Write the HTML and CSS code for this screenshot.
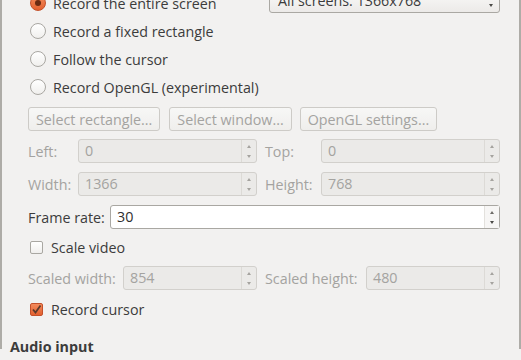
FILE: index.html
```html
<!DOCTYPE html>
<html lang="en">
<head>
    <meta charset="UTF-8">
    <title>Video input</title>
    <link rel="stylesheet" href="styles.css">
</head>
<body>
    <div class="window">
        <div class="group">
            <div class="top-row">
                <div class="option"><span class="radio checked"></span>Record the entire screen</div>
                <div class="combo">
                    <span class="val">All screens: 1366x768</span>
                    <span class="arrows"><i class="up"></i><i class="down"></i></span>
                </div>
            </div>
            <div class="option"><span class="radio"></span>Record a fixed rectangle</div>
            <div class="option"><span class="radio"></span>Follow the cursor</div>
            <div class="option"><span class="radio"></span>Record OpenGL (experimental)</div>

            <div class="buttons">
                <button class="btn" disabled>Select rectangle...</button>
                <button class="btn" disabled>Select window...</button>
                <button class="btn" disabled>OpenGL settings...</button>
            </div>

            <div class="grid area">
                <span class="lbl">Left:</span>
                <div class="spin"><span class="val">0</span><span class="arrows"><i class="up"></i><i class="down"></i></span></div>
                <span class="lbl pad">Top:</span>
                <div class="spin"><span class="val">0</span><span class="arrows"><i class="up"></i><i class="down"></i></span></div>
                <span class="lbl">Width:</span>
                <div class="spin"><span class="val">1366</span><span class="arrows"><i class="up"></i><i class="down"></i></span></div>
                <span class="lbl pad">Height:</span>
                <div class="spin"><span class="val">768</span><span class="arrows"><i class="up"></i><i class="down"></i></span></div>
            </div>

            <div class="frame-row">
                <span class="lbl on">Frame rate:</span>
                <div class="spin active"><span class="val">30</span><span class="arrows"><i class="up"></i><i class="down"></i></span></div>
            </div>

            <div class="check-row"><span class="check"></span>Scale video</div>

            <div class="grid scaled">
                <span class="lbl">Scaled width:</span>
                <div class="spin"><span class="val">854</span><span class="arrows"><i class="up"></i><i class="down"></i></span></div>
                <span class="lbl pad">Scaled height:</span>
                <div class="spin"><span class="val">480</span><span class="arrows"><i class="up"></i><i class="down"></i></span></div>
            </div>

            <div class="check-row cursor">
                <span class="check checked">
                    <svg width="13" height="13" viewBox="0 0 13 13"><path d="M3 6.5 L5.5 9.5 L10.5 2.5" fill="none" stroke="#5b3a2c" stroke-width="1.8"/></svg>
                </span>Record cursor
            </div>
        </div>

        <div class="heading">Audio input</div>
    </div>
</body>
</html>
```

FILE: styles.css
```css
body {
    margin: 0;
    background: #f2f1f0;
    font-family: 'Open Sans', 'DejaVu Sans', sans-serif;
    font-size: 14.3px;
    color: #3c3c3c;
    overflow: hidden;
    height: 360px;
}

.window {
    height: 360px;
    border-left: 2px solid #aeaca7;
    border-right: 2px solid #aeaca7;
    box-sizing: border-box;
}

.group {
    padding: 0 19px 0 26px;
    margin-top: -11px;
}

.top-row {
    display: flex;
    align-items: flex-start;
}

.option {
    display: flex;
    align-items: center;
    height: 28px;
    padding-left: 2px;
}

.radio {
    width: 14px;
    height: 14px;
    border: 1px solid #a9a7a2;
    border-radius: 50%;
    background: linear-gradient(#ffffff, #f0efed);
    margin-right: 7px;
    box-sizing: content-box;
    position: relative;
}

.radio.checked {
    border-color: #c4502a;
    background: linear-gradient(#f38b5c, #e2602f);
}

.radio.checked::after {
    content: "";
    position: absolute;
    left: 4px;
    top: 4px;
    width: 6px;
    height: 6px;
    border-radius: 50%;
    background: #6a2a12;
}

.combo {
    margin-left: auto;
    margin-top: -1px;
    width: 231px;
    height: 25px;
    display: flex;
    border: 1px solid #aaa8a3;
    border-radius: 3px;
    box-sizing: border-box;
    background: linear-gradient(#fbfbfa, #eceae8);
}

.combo .val {
    flex: 1;
    padding-left: 8px;
    line-height: 23px;
}

.arrows {
    width: 14px;
    display: flex;
    flex-direction: column;
    justify-content: center;
    align-items: center;
    gap: 7px;
}

.combo .arrows {
    width: 16px;
}

.up, .down {
    width: 0;
    height: 0;
    border-left: 2px solid transparent;
    border-right: 2px solid transparent;
}

.up {
    border-bottom: 3px solid #a5a39f;
}

.down {
    border-top: 3px solid #a5a39f;
}

.combo .up, .active .up {
    border-bottom-color: #6e6c68;
}

.combo .down, .active .down {
    border-top-color: #4a4946;
}

.buttons {
    display: flex;
    gap: 8px;
    margin-top: 6px;
}

.btn {
    height: 24px;
    padding: 0 7px;
    font-family: inherit;
    font-size: 14.3px;
    color: #a4a3a0;
    border: 1px solid #cdcbc7;
    border-radius: 3px;
    background: linear-gradient(#f7f7f6, #efeeec);
}

.btn:first-child {
    margin-right: 1px;
}

.grid {
    display: grid;
    align-items: center;
}

.area {
    grid-template-columns: 50px 179px 64px 179px;
    row-gap: 9px;
    margin-top: 8px;
}

.scaled {
    grid-template-columns: 95px 134px 109px 134px;
    margin-top: 7px;
}

.lbl {
    color: #a4a3a0;
}

.lbl.pad {
    padding-left: 8px;
}

.lbl.on {
    color: #3c3c3c;
}

.spin {
    height: 24px;
    display: flex;
    border: 1px solid #d2d0cc;
    border-radius: 3px;
    box-sizing: border-box;
    background: #ebeae8;
    color: #a4a3a0;
}

.spin .val {
    flex: 1;
    padding-left: 6px;
    line-height: 22px;
}

.spin .arrows {
    border-left: 1px solid #dcdad6;
}

.spin.active {
    flex: 1;
    background: #ffffff;
    border-color: #a9a7a2;
    color: #2e2e2e;
}

.spin.active .arrows {
    border-left-color: #e3e1dd;
    background: #f7f6f5;
}

.frame-row {
    display: flex;
    align-items: center;
    margin-top: 9px;
}

.frame-row .lbl {
    width: 82px;
}

.check-row {
    display: flex;
    align-items: center;
    height: 24px;
    margin-top: 6px;
    padding-left: 2px;
}

.check-row.cursor {
    margin-top: 7px;
}

.check {
    width: 13px;
    height: 13px;
    border: 1px solid #a9a7a2;
    border-radius: 2px;
    background: linear-gradient(#ffffff, #f0efed);
    margin-right: 8px;
    box-sizing: border-box;
    display: flex;
}

.check.checked {
    border-color: #c4502a;
    background: linear-gradient(#f38b5c, #e2602f);
}

.check svg {
    margin: -1px;
}

.heading {
    font-weight: bold;
    padding-left: 8px;
    margin-top: 14px;
    line-height: 24px;
}
```
